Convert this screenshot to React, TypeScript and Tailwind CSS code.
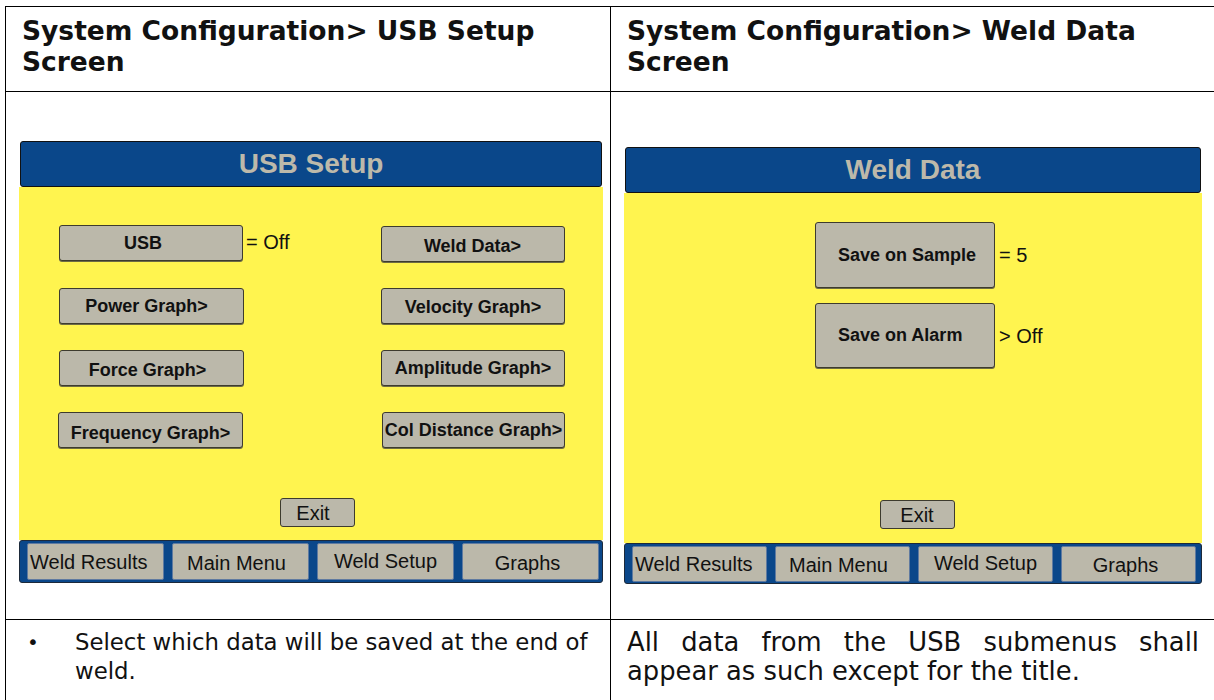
import React from "react";

const BLUE = "bg-[#0a478a]";

function Key({ label, className = "" }: { label: string; className?: string }) {
  return (
    <div
      className={`flex items-center justify-center rounded-[3px] border border-[#3d3b2e] bg-[#bbb8aa] shadow-[0_1px_0_#6e6b45] text-[18px] font-bold text-[#111] ${className}`}
    >
      {label}
    </div>
  );
}

function NavBar({ narrow }: { narrow?: boolean }) {
  const w = narrow ? "w-[135px]" : "w-[137px]";
  const h = narrow ? "h-[36px]" : "h-[37px]";
  const btn = `${w} ${h} rounded-[2px] border border-[#5f7aa0] bg-[#bbb8aa] text-[20px] text-[#111] flex items-center`;
  return (
    <div className={`${BLUE} flex gap-[8px] rounded-[3px] border border-[#1d2a3a] pl-[7px] pt-[2px] ${narrow ? "h-[41px]" : "h-[43px]"}`}>
      <div className={`${btn} pl-[2px]`}>Weld Results</div>
      <div className={`${btn} justify-center pr-[8px] ${narrow ? "pt-[1px]" : "pt-[2px]"}`}>Main Menu</div>
      <div className={`${btn} justify-center pb-[2px] ${narrow ? "pb-[3px]" : ""}`}>Weld Setup</div>
      <div className={`${btn} justify-center pr-[6px] ${narrow ? "pt-[1px]" : "pt-[2px]"}`}>Graphs</div>
    </div>
  );
}

function Header({ title }: { title: string }) {
  return (
    <div className={`${BLUE} mx-px flex h-[46px] items-center justify-center rounded-[3px] border border-[#111] text-[28px] font-bold text-[#bdb9aa]`}>
      {title}
    </div>
  );
}

function UsbSetupScreen() {
  return (
    <div className="w-[584px] font-['Liberation_Sans',Arial,sans-serif]">
      <Header title="USB Setup" />
      <div className="flex h-[353px] flex-col bg-[#fff44f] pt-[38px]">
        <div className="flex flex-col gap-[26px]">
          <div className="flex">
            <Key label="USB" className="ml-[40px] h-[36px] w-[184px] pr-[16px]" />
            <span className="ml-[3px] text-[20px] leading-[34px] text-[#111]">= Off</span>
            <Key label="Weld Data>" className="ml-[91px] mt-px h-[36px] w-[184px] pt-[4px]" />
          </div>
          <div className="flex">
            <Key label="Power Graph>" className="ml-[40px] h-[36px] w-[185px] pr-[10px]" />
            <Key label="Velocity Graph>" className="ml-[137px] h-[36px] w-[184px] pt-[2px]" />
          </div>
          <div className="flex">
            <Key label="Force Graph>" className="ml-[40px] h-[36px] w-[185px] pr-[8px] pt-[4px]" />
            <Key label="Amplitude Graph>" className="ml-[137px] h-[36px] w-[184px]" />
          </div>
          <div className="flex">
            <Key label="Frequency Graph>" className="ml-[39px] h-[36px] w-[185px] pt-[6px]" />
            <Key label="Col Distance Graph>" className="ml-[139px] h-[36px] w-[183px]" />
          </div>
        </div>
        <div className="mt-[50px] flex justify-center">
          <div className="ml-[12px] flex h-[29px] w-[75px] items-center justify-center rounded-[3px] border border-[#3d3b2e] bg-[#bbb8aa] pr-[8px] text-[20px] text-[#111]">
            Exit
          </div>
        </div>
      </div>
      <NavBar />
    </div>
  );
}

function WeldDataScreen() {
  return (
    <div className="w-[578px] font-['Liberation_Sans',Arial,sans-serif]">
      <Header title="Weld Data" />
      <div className="flex h-[350px] flex-col bg-[#fff44f] pt-[29px]">
        <div className="flex flex-col gap-[15px] pl-[191px]">
          <div className="flex items-center">
            <div className="flex h-[66px] w-[180px] items-center rounded-[3px] border border-[#3d3b2e] bg-[#bbb8aa] pl-[22px] text-[18px] font-bold text-[#111] shadow-[0_1px_0_#6e6b45]">
              Save on Sample
            </div>
            <span className="ml-[4px] text-[20px] text-[#111]">= 5</span>
          </div>
          <div className="flex items-center">
            <div className="flex h-[65px] w-[180px] items-center rounded-[3px] border border-[#3d3b2e] bg-[#bbb8aa] pl-[22px] text-[18px] font-bold text-[#111] shadow-[0_1px_0_#6e6b45]">
              Save on Alarm
            </div>
            <span className="ml-[4px] text-[20px] text-[#111]">&gt; Off</span>
          </div>
        </div>
        <div className="mt-[132px] flex justify-center">
          <div className="ml-[8px] flex h-[29px] w-[75px] items-center justify-center rounded-[3px] border border-[#3d3b2e] bg-[#bbb8aa] text-[20px] text-[#111]">
            Exit
          </div>
        </div>
      </div>
      <NavBar narrow />
    </div>
  );
}

export default function App() {
  return (
    <div className="h-[700px] w-[1214px] overflow-hidden bg-white">
      <div className="ml-[5px] mt-[6px] grid w-[1212px] grid-cols-[605px_1fr] border-l border-r border-t border-black font-['DejaVu_Sans',Verdana,sans-serif] text-[#111]">
        <div className="h-[85px] border-b border-r border-black px-[16px] pt-[8px] text-[26.5px] font-bold leading-[31px]">
          System Configuration&gt; USB Setup Screen
        </div>
        <div className="h-[85px] border-b border-black px-[16px] pt-[8px] text-[26.5px] font-bold leading-[31px]">
          System Configuration&gt; Weld Data Screen
        </div>

        <div className="h-[528px] border-b border-r border-black pl-[13px] pt-[49px]">
          <UsbSetupScreen />
        </div>
        <div className="h-[528px] border-b border-black pl-[13px] pt-[55px]">
          <WeldDataScreen />
        </div>

        <div className="h-[120px] border-r border-black pl-[21px] pr-[8px] pt-[8px] text-[22.8px] leading-[29px]">
          <div className="flex">
            <span className="w-[48px] text-[20px]">•</span>
            <span className="flex-1">Select which data will be saved at the end of weld.</span>
          </div>
        </div>
        <div className="h-[120px] pl-[16px] pr-[17px] pt-[8px] text-[25.8px] leading-[29px]">
          <div className="text-justify [text-align-last:justify]">All data from the USB submenus shall</div>
          <div>appear as such except for the title.</div>
        </div>
      </div>
    </div>
  );
}
